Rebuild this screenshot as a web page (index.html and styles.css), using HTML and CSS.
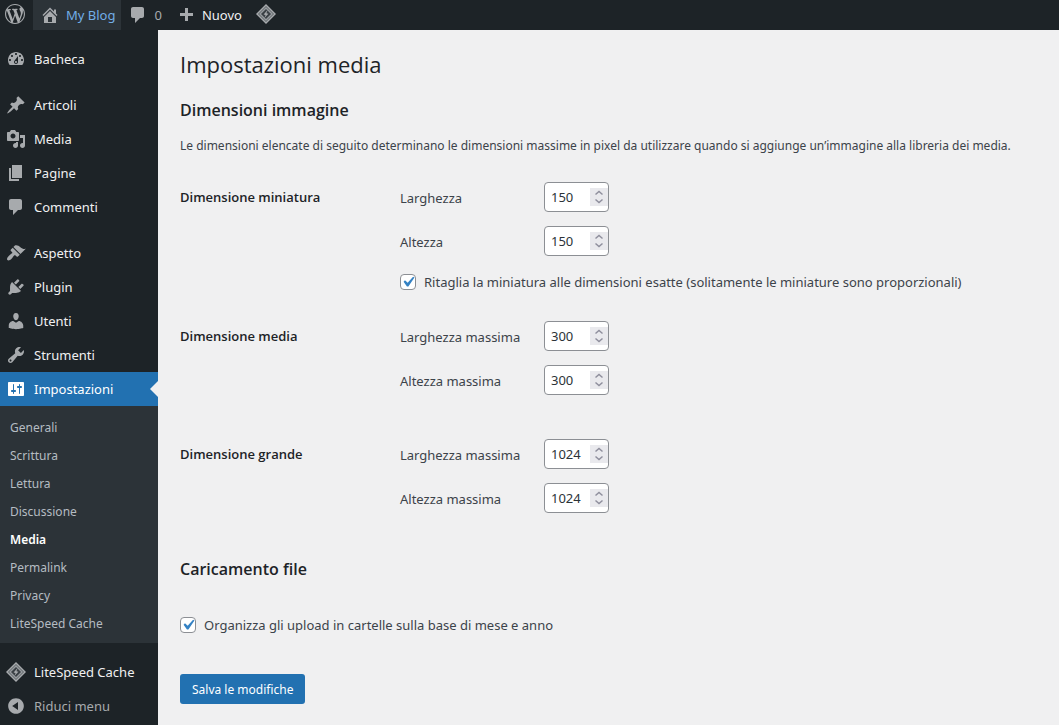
FILE: index.html
```html
<!DOCTYPE html>
<html lang="it">
<head>
  <meta charset="UTF-8" />
  <meta name="viewport" content="width=device-width, initial-scale=1.0" />
  <title>Impostazioni media – My Blog</title>
  <link rel="stylesheet" href="styles.css">
</head>
<body>
  <!-- icone condivise tra barra e menu -->
  <svg class="sprite" aria-hidden="true">
    <symbol id="i-comments" viewBox="0 0 20 20"><path d="M5 2h9c1.1 0 2 .9 2 2v7c0 1.1-.9 2-2 2h-2l-5 5v-5H5c-1.1 0-2-.9-2-2V4c0-1.1.9-2 2-2z"/></symbol>
    <symbol id="i-litespeed" viewBox="0 0 20 20">
      <path d="M10 0l10 10-10 10L0 10z"/>
      <path d="M10 2l8 8-8 8-8-8z" fill="#5a6065"/>
      <path d="M10 3l7 7-7 7-7-7z" fill="#969a9e"/>
      <path d="M10 5l5 5-5 5-5-5z" fill="#3a4045"/>
      <path d="M11.600 6L7.600 10.400l2 .5-1.200 3.200 4-4.400-2-.5z"/>
    </symbol>
  </svg>

  <header class="adminbar">
    <a class="bar-item bar-logo" href="#" aria-label="WordPress">
      <svg class="icon" viewBox="0 0 20 20"><path d="M20 10c0-5.51-4.49-10-10-10C4.48 0 0 4.49 0 10c0 5.52 4.48 10 10 10 5.51 0 10-4.48 10-10zM7.78 15.37L4.37 6.22c.55-.02 1.17-.08 1.17-.08.5-.06.44-1.13-.06-1.11 0 0-1.45.11-2.37.11-.18 0-.37 0-.58-.01C4.12 2.69 6.87 1.11 10 1.11c2.33 0 4.45.87 6.05 2.34-.68-.11-1.65.39-1.65 1.58 0 .74.45 1.36.9 2.1.35.61.55 1.36.55 2.46 0 1.49-1.4 5-1.4 5l-3.03-8.37c.54-.02.82-.17.82-.17.5-.05.44-1.25-.06-1.22 0 0-1.44.12-2.38.12-.87 0-2.33-.12-2.33-.12-.5-.03-.56 1.2-.06 1.22l.92.08 1.26 3.41zM17.41 10c.24-.64.74-1.87.43-4.25.7 1.29 1.05 2.71 1.05 4.25 0 3.29-1.73 6.24-4.4 7.78.97-2.59 1.94-5.2 2.92-7.78zM6.1 18.09C3.12 16.65 1.11 13.53 1.11 10c0-1.3.23-2.48.72-3.59C3.25 10.3 4.67 14.2 6.1 18.09zm4.03-6.63l2.58 6.98c-.86.29-1.76.45-2.71.45-.79 0-1.57-.11-2.29-.33.81-2.38 1.62-4.74 2.42-7.1z"/></svg>
    </a>
    <a class="bar-item bar-site" href="#">
      <svg class="icon" viewBox="0 0 20 20"><path d="M16 8.5l1.53 1.53-1.06 1.06L10 4.6l-6.47 6.49-1.06-1.06L10 2.5l4 4v-2h2v4zm-6-2.46l6 5.99V18H4v-5.97zM12 17v-5H8v5h4z"/></svg>
      My Blog
    </a>
    <a class="bar-item bar-comments" href="#"><svg class="icon"><use href="#i-comments"/></svg>0</a>
    <a class="bar-item bar-new" href="#">
      <svg class="icon" viewBox="0 0 20 20"><path d="M17 8v3h-5v5H9v-5H4V8h5V3h3v5h5z"/></svg>
      Nuovo
    </a>
    <a class="bar-item bar-ls" href="#" aria-label="LiteSpeed Cache"><svg class="icon"><use href="#i-litespeed"/></svg></a>
  </header>

  <div class="layout">
    <nav class="menu">
      <a class="menu-item" href="#"><svg class="icon" viewBox="0 0 20 20"><path d="M3.76 16h12.48c1.1-1.37 1.76-3.11 1.76-5 0-4.42-3.58-8-8-8s-8 3.58-8 8c0 1.89.66 3.63 1.76 5zM10 4c.55 0 1 .45 1 1s-.45 1-1 1-1-.45-1-1 .45-1 1-1zM6 6c.55 0 1 .45 1 1s-.45 1-1 1-1-.45-1-1 .45-1 1-1zm8 0c.55 0 1 .45 1 1s-.45 1-1 1-1-.45-1-1 .45-1 1-1zm-5.37 5.55L12 7v6c0 1.1-.9 2-2 2s-2-.9-2-2c0-.57.24-1.08.63-1.45zM4 10c.55 0 1 .45 1 1s-.45 1-1 1-1-.45-1-1 .45-1 1-1zm12 0c.55 0 1 .45 1 1s-.45 1-1 1-1-.45-1-1 .45-1 1-1zm-5 3c0-.55-.45-1-1-1s-1 .45-1 1 .45 1 1 1 1-.45 1-1z"/></svg>Bacheca</a>
      <div class="separator"></div>
      <a class="menu-item" href="#"><svg class="icon" viewBox="0 0 20 20"><path d="M10.44 3.02l1.82-1.82 6.36 6.35-1.83 1.82c-1.05-.68-2.48-.57-3.41.36l-.75.75c-.92.93-1.04 2.35-.35 3.41l-1.83 1.82-2.41-2.41-2.8 2.79c-.42.42-3.38 2.71-3.8 2.29s1.86-3.39 2.28-3.81l2.79-2.79L4.1 9.36l1.83-1.82c1.05.69 2.48.57 3.4-.36l.75-.75c.93-.92 1.05-2.35.36-3.41z"/></svg>Articoli</a>
      <a class="menu-item" href="#"><svg class="icon" viewBox="0 0 20 20"><path d="M13 11V4c0-.55-.45-1-1-1h-1.67L9 1H5L3.67 3H2c-.55 0-1 .45-1 1v7c0 .55.45 1 1 1h10c.55 0 1-.45 1-1zM7 4.5c1.38 0 2.5 1.12 2.5 2.5S8.38 9.5 7 9.5 4.5 8.38 4.5 7 5.62 4.5 7 4.5zM14 6h5v10.5c0 1.38-1.12 2.5-2.5 2.5S14 17.88 14 16.5s1.12-2.5 2.5-2.5c.17 0 .34.02.5.05V9h-3V6zm-4 8.05V13h2v3.5c0 1.38-1.12 2.5-2.5 2.5S7 17.88 7 16.5 8.12 14 9.5 14c.17 0 .34.02.5.05z"/></svg>Media</a>
      <a class="menu-item" href="#"><svg class="icon" viewBox="0 0 20 20"><path d="M6 15V2h10v13H6zm-1 1h8v2H3V5h2v11z"/></svg>Pagine</a>
      <a class="menu-item" href="#"><svg class="icon"><use href="#i-comments"/></svg>Commenti</a>
      <div class="separator"></div>
      <a class="menu-item" href="#"><svg class="icon" viewBox="0 0 20 20"><path d="M14.48 11.06L7.41 3.99l1.5-1.5c.5-.56 2.3-.47 3.51.32 1.21.8 1.43 1.28 2.91 2.1 1.18.64 2.45 1.26 4.45.85zm-.71.71L6.7 4.7 4.93 6.47c-.39.39-.39 1.02 0 1.41l1.06 1.06c.39.39.39 1.03 0 1.42-.6.6-1.43 1.11-2.21 1.69-.35.26-.7.53-1.01.84C1.43 14.23.4 16.08 1.4 17.07c.99 1 2.84-.03 4.18-1.36.31-.31.58-.66.85-1.02.57-.78 1.08-1.61 1.69-2.21.39-.39 1.02-.39 1.41 0l1.06 1.06c.39.39 1.02.39 1.41 0z"/></svg>Aspetto</a>
      <a class="menu-item" href="#"><svg class="icon" viewBox="0 0 20 20"><path d="M13.11 4.36L9.87 7.6 8 5.73l3.24-3.24c.35-.34 1.05-.2 1.56.32.52.51.66 1.21.31 1.55zm-8 1.77l.91-1.12 9.01 9.01-1.19.84c-.71.71-2.63 1.16-3.82 1.16H6.14L4.9 17.26c-.59.59-1.54.59-2.12 0-.59-.58-.59-1.53 0-2.12l1.24-1.24v-3.88c0-1.13.4-3.19 1.09-3.89zm7.26 3.97l3.24-3.24c.34-.35 1.04-.21 1.55.31.52.51.66 1.21.31 1.55l-3.24 3.25z"/></svg>Plugin</a>
      <a class="menu-item" href="#"><svg class="icon" viewBox="0 0 20 20"><path d="M10 9.25c-2.27 0-2.73-3.44-2.73-3.44C7 4.02 7.82 2 9.97 2c2.16 0 2.98 2.02 2.71 3.81 0 0-.41 3.44-2.68 3.44zm0 2.57L12.72 10c2.39 0 4.52 2.33 4.52 4.53v2.49s-3.65 1.13-7.24 1.13c-3.65 0-7.24-1.13-7.24-1.13v-2.49c0-2.25 1.94-4.48 4.47-4.48z"/></svg>Utenti</a>
      <a class="menu-item" href="#"><svg class="icon" viewBox="0 0 20 20"><path d="M16.68 9.77c-1.34 1.34-3.3 1.67-4.95.99l-5.41 6.52c-.99.99-2.59.99-3.58 0s-.99-2.59 0-3.57l6.52-5.42c-.68-1.65-.35-3.61.99-4.95 1.28-1.28 3.12-1.62 4.72-1.06l-2.89 2.89 2.82 2.82 2.86-2.87c.53 1.58.18 3.39-1.08 4.65zM3.81 16.21c.4.39 1.04.39 1.43 0 .4-.4.4-1.04 0-1.43-.39-.4-1.03-.4-1.43 0-.39.39-.39 1.03 0 1.43z"/></svg>Strumenti</a>
      <a class="menu-item current" href="#"><svg class="icon" viewBox="0 0 20 20"><path d="M18 16V4c0-.55-.45-1-1-1H3c-.55 0-1 .45-1 1v12c0 .55.45 1 1 1h14c.55 0 1-.45 1-1zM8 11h1c.55 0 1 .45 1 1s-.45 1-1 1H8v1.5c0 .28-.22.5-.5.5s-.5-.22-.5-.5V13H6c-.55 0-1-.45-1-1s.45-1 1-1h1V5.5c0-.28.22-.5.5-.5s.5.22.5.5V11zm5-2h-1c-.55 0-1-.45-1-1s.45-1 1-1h1V5.5c0-.28.22-.5.5-.5s.5.22.5.5V7h1c.55 0 1 .45 1 1s-.45 1-1 1h-1v5.5c0 .28-.22.5-.5.5s-.5-.22-.5-.5V9z"/></svg>Impostazioni</a>
      <div class="submenu">
        <a href="#">Generali</a>
        <a href="#">Scrittura</a>
        <a href="#">Lettura</a>
        <a href="#">Discussione</a>
        <a class="active" href="#">Media</a>
        <a href="#">Permalink</a>
        <a href="#">Privacy</a>
        <a href="#">LiteSpeed Cache</a>
      </div>
      <div class="separator"></div>
      <a class="menu-item" href="#"><svg class="icon"><use href="#i-litespeed"/></svg>LiteSpeed Cache</a>
      <button class="menu-item collapse" type="button"><svg class="icon" viewBox="0 0 20 20"><path d="M10 2.160c4.330 0 7.840 3.510 7.840 7.840s-3.510 7.840-7.840 7.840S2.160 14.330 2.160 10 5.670 2.160 10 2.160zm2 11.720V6.120L6.180 9.970z"/></svg>Riduci menu</button>
    </nav>

    <main class="content">
      <h1>Impostazioni media</h1>
      <form>
        <h2>Dimensioni immagine</h2>
        <p class="intro">Le dimensioni elencate di seguito determinano le dimensioni massime in pixel da utilizzare quando si aggiunge un’immagine alla libreria dei media.</p>

        <section class="row row-check">
          <h3>Dimensione miniatura</h3>
          <div class="fields">
            <div class="field"><label for="thumbW">Larghezza</label><input type="number" id="thumbW" value="150" /></div>
            <div class="field"><label for="thumbH">Altezza</label><input type="number" id="thumbH" value="150" /></div>
            <label class="check"><input type="checkbox" checked />Ritaglia la miniatura alle dimensioni esatte (solitamente le miniature sono proporzionali)</label>
          </div>
        </section>
        <section class="row">
          <h3>Dimensione media</h3>
          <div class="fields">
            <div class="field"><label for="medW">Larghezza massima</label><input type="number" id="medW" value="300" /></div>
            <div class="field"><label for="medH">Altezza massima</label><input type="number" id="medH" value="300" /></div>
          </div>
        </section>
        <section class="row">
          <h3>Dimensione grande</h3>
          <div class="fields">
            <div class="field"><label for="bigW">Larghezza massima</label><input type="number" id="bigW" value="1024" /></div>
            <div class="field"><label for="bigH">Altezza massima</label><input type="number" id="bigH" value="1024" /></div>
          </div>
        </section>

        <h2>Caricamento file</h2>
        <label class="check upload"><input type="checkbox" checked />Organizza gli upload in cartelle sulla base di mese e anno</label>
        <button class="save" type="button">Salva le modifiche</button>
      </form>
    </main>
  </div>
</body>
</html>
```
FILE: styles.css
```css
* { box-sizing: border-box; }
body { margin: 0; min-height: 100vh; display: flex; flex-direction: column; background: #f0f0f1; color: #3c434a; font-family: "Noto Sans", "Open Sans", sans-serif; font-size: 13px; }
a { color: inherit; text-decoration: none; }
h1, h2, h3, p { margin: 0; color: #1d2327; }
h1, h2, h3 { font-family: "Open Sans", "Noto Sans", sans-serif; }
.sprite { display: none; }
.icon { width: 20px; height: 20px; flex: none; fill: #a7aaad; }

/* barra superiore */
.adminbar { display: flex; height: 30px; background: #1d2327; color: #f0f0f1; line-height: 30px; }
.bar-item { display: flex; align-items: center; gap: 6px; }
.bar-logo { padding: 0 8px 2px 5px; }
.bar-site { padding: 0 6px 0 7px; background: #2c3338; color: #72aee6; }
.bar-comments { padding-left: 7px; color: #a7aaad; }
.bar-new { padding: 0 14px; }
.bar-ls { padding-bottom: 3px; }

/* menu laterale */
.layout { display: flex; flex: 1; }
.menu { width: 158px; flex: none; padding-top: 12px; background: #1d2327; color: #f0f0f1; }
.menu-item { position: relative; display: flex; align-items: center; gap: 8px; width: 100%; height: 34px; padding: 0 6px; white-space: nowrap; }
.separator { height: 12px; }
.current { background: #2271b1; color: #fff; }
.current .icon { fill: #fff; }
.current::after { content: ""; position: absolute; right: 0; top: 9px; border: 8px solid transparent; border-left: 0; border-right-color: #f0f0f1; }
.submenu { padding: 8px 0 5px; background: #2c3338; color: #b5bcc2; font-size: 12px; }
.submenu a { display: block; padding: 0 10px; line-height: 28px; }
.submenu .active { color: #fff; font-weight: 600; }
.collapse { border: 0; background: none; color: #a7aaad; font: inherit; cursor: pointer; }

/* contenuto */
.content { flex: 1; padding: 19px 22px; }
h1 { font-size: 22px; font-weight: 400; line-height: 30px; }
h2 { margin-top: 19px; font-size: 16px; font-weight: 600; line-height: 24px; }
.intro { margin: 13px 0 25px; color: #3c434a; font-size: 12px; line-height: 22px; }
.row { display: grid; grid-template-columns: 220px 1fr; margin-bottom: 44px; }
.row-check { margin-bottom: 27px; }
h3 { font-size: 13px; font-weight: 600; line-height: 30px; }
.fields { display: grid; gap: 14px; }
.field { display: grid; grid-template-columns: 144px 65px; line-height: 32px; height: 30px; }
.check { display: flex; align-items: center; gap: 8px; height: 24px; }
input[type=number] { width: 65px; height: 30px; padding: 0 0 0 6px; border: 1px solid #8c8f94; border-radius: 4px; background: #fff; color: #2c3338; font: inherit; }
input[type=number]::-webkit-inner-spin-button { appearance: none; align-self: center; opacity: 1; width: 18px; height: 18px; background: #e9e9ed url("data:image/svg+xml,%3Csvg xmlns='http://www.w3.org/2000/svg' viewBox='0 0 18 18' fill='none' stroke='%238f8f9d' stroke-width='1.5'%3E%3Cpath d='M5.500 6.500l3.500-3 3.500 3M5.500 11.500l3.500 3 3.500-3'/%3E%3C/svg%3E"); }
input[type=checkbox] { appearance: none; width: 16px; height: 16px; flex: none; margin: 0; border: 1px solid #8c8f94; border-radius: 4px; background: #fff url("data:image/svg+xml,%3Csvg xmlns='http://www.w3.org/2000/svg' viewBox='0 0 20 20'%3E%3Cpath d='M14.830 4.890l1.340.940-5.810 8.380H9.020L5.780 9.670l1.340-1.250 2.570 2.400z' fill='%233582c4'/%3E%3C/svg%3E") center / 21px; }
.upload { margin: 32px 0 37px; }
.save { height: 30px; padding: 0 12px; border: 0; border-radius: 3px; background: #2271b1; color: #fff; font: inherit; font-size: 12px; cursor: pointer; }
```
